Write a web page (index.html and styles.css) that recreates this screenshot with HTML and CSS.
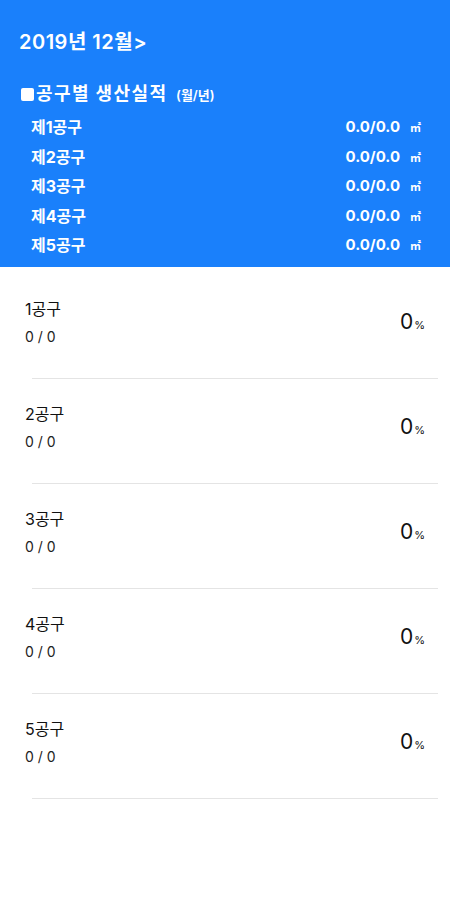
FILE: index.html
```html
<!DOCTYPE html>
<html>
<head>
  <meta charset="UTF-8">
  <title>공구별 생산실적</title>
  <link rel="stylesheet" href="styles.css">
</head>
<body>
  <div class="summary">
    <div class="month">2019년 12월&gt;</div>
    <div class="section-title"><span class="bullet"></span>공구별 생산실적 <small>(월/년)</small></div>
    <ul class="totals">
      <li><span>제1공구</span><span class="amount">0.0/0.0<em>㎡</em></span></li>
      <li><span>제2공구</span><span class="amount">0.0/0.0<em>㎡</em></span></li>
      <li><span>제3공구</span><span class="amount">0.0/0.0<em>㎡</em></span></li>
      <li><span>제4공구</span><span class="amount">0.0/0.0<em>㎡</em></span></li>
      <li><span>제5공구</span><span class="amount">0.0/0.0<em>㎡</em></span></li>
    </ul>
  </div>

  <ul class="progress-list">
    <li class="progress-item">
      <div class="info"><div class="name">1공구</div><div class="count">0 / 0</div></div>
      <div class="rate">0<small>%</small></div>
    </li>
    <li class="progress-item">
      <div class="info"><div class="name">2공구</div><div class="count">0 / 0</div></div>
      <div class="rate">0<small>%</small></div>
    </li>
    <li class="progress-item">
      <div class="info"><div class="name">3공구</div><div class="count">0 / 0</div></div>
      <div class="rate">0<small>%</small></div>
    </li>
    <li class="progress-item">
      <div class="info"><div class="name">4공구</div><div class="count">0 / 0</div></div>
      <div class="rate">0<small>%</small></div>
    </li>
    <li class="progress-item">
      <div class="info"><div class="name">5공구</div><div class="count">0 / 0</div></div>
      <div class="rate">0<small>%</small></div>
    </li>
  </ul>
</body>
</html>
```

FILE: styles.css
```css
body {
  margin: 0;
  font-family: Inter, "Noto Sans CJK KR", sans-serif;
  background: #fff;
  color: #111;
}
.summary {
  background-color: #1a80fb;
  color: white;
  padding: 28px 0 12px 0;
  height: 267px;
  box-sizing: border-box;
}
.month {
  margin-left: 19px;
  font-size: 20px;
  font-weight: 600;
  line-height: 28px;
  letter-spacing: 0.5px;
}
.section-title {
  margin: 26px 0 0 21px;
  font-size: 18px;
  font-weight: 700;
  line-height: 24px;
  letter-spacing: 1.4px;
}
.bullet {
  display: inline-block;
  width: 13px;
  height: 13px;
  background: white;
  border-radius: 2px;
  margin-right: 2px;
  vertical-align: -1px;
}
.section-title small {
  font-size: 13px;
  font-weight: 600;
  margin-left: 3px;
  letter-spacing: 0;
}
.totals {
  list-style: none;
  margin: 6px 0 0 0;
  padding: 0 29px 0 31px;
}
.totals li {
  display: flex;
  justify-content: space-between;
  font-size: 16px;
  font-weight: 700;
  line-height: 28.5px;
}
.amount {
  font-size: 15px;
}
.amount em {
  font-style: normal;
  font-size: 11px;
  font-weight: 600;
  margin-left: 10px;
}
.progress-list {
  list-style: none;
  margin: 0;
  padding: 7px 0 0 0;
}
.progress-item {
  display: flex;
  justify-content: space-between;
  align-items: center;
  padding: 25px 25px 32px 25px;
  position: relative;
}
.progress-item::after {
  content: "";
  position: absolute;
  left: 32px;
  right: 12px;
  bottom: 0;
  border-bottom: 1px solid #e4e4e4;
}
.name {
  font-size: 16px;
  line-height: 20px;
}
.count {
  margin-top: 8px;
  font-size: 14px;
  line-height: 20px;
  color: #222;
}
.rate {
  font-size: 21px;
  margin-top: -4px;
}
.rate small {
  font-size: 11px;
  margin-left: 1px;
}
```
